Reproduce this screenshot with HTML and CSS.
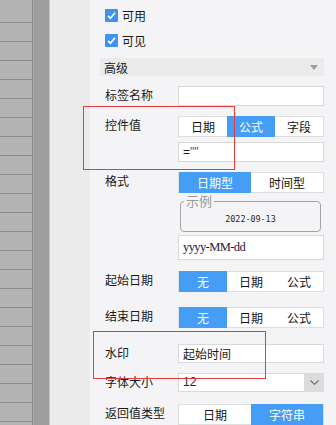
FILE: index.html
```html
<!DOCTYPE html>
<html lang="zh">
<head>
<meta charset="utf-8">
<title>控件属性</title>
<link rel="stylesheet" href="styles.css">
</head>
<body>
<div class="ruler"></div>
<div class="strip"></div>
<div class="gutter"></div>
<main class="panel">
  <label class="check">
    <span class="box"><svg width="13" height="13" viewBox="0 0 13 13"><rect width="13" height="13" rx="1" fill="#3f92f2"/><polyline points="3,6.8 5.4,9.2 10,3.8" fill="none" stroke="#fff" stroke-width="1.7"/></svg></span>可用
  </label>
  <label class="check check-second">
    <span class="box"><svg width="13" height="13" viewBox="0 0 13 13"><rect width="13" height="13" rx="1" fill="#3f92f2"/><polyline points="3,6.8 5.4,9.2 10,3.8" fill="none" stroke="#fff" stroke-width="1.7"/></svg></span>可见
  </label>
  <div class="section">
    <span>高级</span>
    <svg class="caret" width="8" height="5" viewBox="0 0 8 5"><polygon points="0,0 8,0 4,5" fill="#9b9b9b"/></svg>
  </div>

  <div class="field f-name">
    <span class="lbl">标签名称</span>
    <div class="ctl"><div class="input"></div></div>
  </div>

  <div class="field f-value">
    <span class="lbl">控件值</span>
    <div class="ctl">
      <div class="seg"><span>日期</span><span class="on">公式</span><span>字段</span></div>
      <div class="input input-formula">=<span class="quote">""</span></div>
    </div>
  </div>

  <div class="field f-format">
    <span class="lbl">格式</span>
    <div class="ctl">
      <div class="seg"><span class="on">日期型</span><span>时间型</span></div>
      <fieldset class="sample">
        <legend>示例</legend>
        <div class="sample-date">2022-09-13</div>
      </fieldset>
      <div class="input input-pattern">yyyy-MM-dd</div>
    </div>
  </div>

  <div class="field f-start">
    <span class="lbl">起始日期</span>
    <div class="ctl"><div class="seg"><span class="on">无</span><span>日期</span><span>公式</span></div></div>
  </div>

  <div class="field f-end">
    <span class="lbl">结束日期</span>
    <div class="ctl"><div class="seg"><span class="on">无</span><span>日期</span><span>公式</span></div></div>
  </div>

  <div class="field f-water">
    <span class="lbl">水印</span>
    <div class="ctl"><div class="input input-text">起始时间</div></div>
  </div>

  <div class="field f-size">
    <span class="lbl">字体大小</span>
    <div class="ctl">
      <div class="select">
        <span class="select-val">12</span>
        <span class="select-btn"><svg width="9" height="5" viewBox="0 0 9 5"><polyline points="0.5,0.5 4.5,4.3 8.5,0.5" fill="none" stroke="#6a6a6a" stroke-width="1.1"/></svg></span>
      </div>
    </div>
  </div>

  <div class="field f-return">
    <span class="lbl">返回值类型</span>
    <div class="ctl"><div class="seg"><span>日期</span><span class="on">字符串</span></div></div>
  </div>
</main>
<div class="mark mark-value"></div>
<div class="mark mark-water"></div>
</body>
</html>
```

FILE: styles.css
```css
* { box-sizing: border-box; }

html, body {
  margin: 0;
  height: 425px;
  overflow: hidden;
}

body {
  display: flex;
  position: relative;
  font-family: "Noto Sans CJK SC", "Noto Sans", sans-serif;
  font-size: 12px;
  color: #1a1a1a;
  background: #f4f4f6;
}

.ruler {
  width: 33px;
  flex: none;
  border-right: 1px solid #8a8a8a;
  background: #b3b3b3 repeating-linear-gradient(to bottom, #b3b3b3 0 18px, #8c8c8c 18px 19px) 0 4px / 100% 100% repeat-x;
}

.strip {
  width: 17px;
  flex: none;
  background: #9e9e9e;
  border-left: 1px solid #ababab;
  border-right: 1px solid #c6c6c6;
}

.gutter {
  width: 40px;
  flex: none;
  background: #ebebeb;
}

.panel {
  flex: 1;
  display: flex;
  flex-direction: column;
  padding: 9px 12px 0 15px;
  background: #f4f4f6;
}

.check {
  display: flex;
  align-items: center;
  gap: 4px;
  height: 13px;
  line-height: 13px;
}

.check .box { display: flex; }

.check-second { margin-top: 12px; }

.section {
  margin: 11px 0 0 -5px;
  height: 20px;
  padding: 0 6px 0 4px;
  display: flex;
  align-items: center;
  justify-content: space-between;
  background: #ebebeb;
}

.caret { margin-top: 1px; }

.field {
  display: grid;
  grid-template-columns: 73px 146px;
  align-items: start;
}

.lbl {
  line-height: 18px;
  white-space: nowrap;
}

.ctl {
  display: flex;
  flex-direction: column;
}

.f-name { margin-top: 10px; }
.f-value { margin-top: 10px; }
.f-format { margin-top: 10px; }
.f-start { margin-top: 11px; }
.f-end { margin-top: 15px; }
.f-water { margin-top: 16px; }
.f-size { margin-top: 10px; }
.f-return { margin-top: 12px; }

.input {
  height: 20px;
  background: #fff;
  border: 1px solid #d9d9d9;
  padding-left: 4px;
  display: flex;
  align-items: center;
  white-space: nowrap;
}

.input-formula {
  margin-top: 5px;
  height: 20px;
  font-family: "Liberation Sans", sans-serif;
  font-size: 12px;
}

.quote { color: #1f55b0; }

.input-pattern {
  margin-top: 3px;
  height: 25px;
  font-family: "Liberation Serif", serif;
  font-size: 12.5px;
  letter-spacing: -0.6px;
  color: #1b1b33;
}

.input-text { height: 19px; }

.seg {
  display: flex;
  height: 21px;
  background: #fff;
  border: 1px solid #dedede;
}

.seg span {
  flex: 1;
  text-align: center;
  line-height: 19px;
  color: #151515;
}

.seg span.on {
  background: #459df5;
  color: #fff;
  margin: -1px 0;
  line-height: 21px;
}

.sample {
  margin: 1px 3px 0 2px;
  padding: 0;
  height: 38px;
  border: 1px solid #a3a3a3;
  border-radius: 4px;
}

.sample legend {
  margin-left: 3px;
  padding: 0 2px;
  line-height: 14px;
  font-size: 13px;
  color: #9a9a9a;
}

.sample-date {
  height: 23px;
  line-height: 23px;
  text-align: center;
  font-family: "DejaVu Sans Mono", monospace;
  font-size: 8.4px;
  color: #262640;
}

.select {
  display: flex;
  height: 19px;
  background: #fff;
  border: 1px solid #d9d9d9;
  border-right: none;
}

.select-val {
  flex: 1;
  padding-left: 4px;
  line-height: 17px;
  font-family: "Liberation Sans", sans-serif;
  font-size: 12px;
  color: #1b2452;
}

.select-btn {
  width: 20px;
  margin: -1px 0;
  background: #dcdcdc;
  display: flex;
  align-items: center;
  justify-content: center;
}

.mark {
  position: absolute;
  border: 1px solid #e53b3b;
  pointer-events: none;
}

.mark-value {
  left: 83px;
  top: 106px;
  width: 152px;
  height: 64px;
}

.mark-water {
  left: 93px;
  top: 331px;
  width: 173px;
  height: 48px;
}
```
